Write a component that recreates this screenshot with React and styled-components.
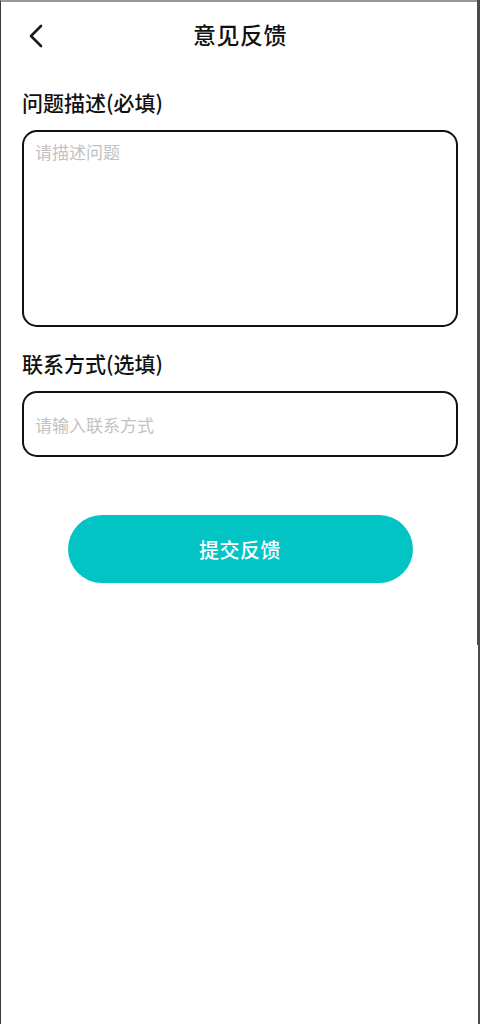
import React, { useState } from "react";
import styled, { createGlobalStyle } from "styled-components";

const GlobalStyle = createGlobalStyle`
  html, body {
    margin: 0;
    padding: 0;
    background: #ffffff;
  }
  body {
    font-family: "Noto Sans CJK SC", "Noto Sans", sans-serif;
  }
  * {
    box-sizing: border-box;
  }
`;

const Screen = styled.div`
  position: relative;
  width: 480px;
  min-height: 1024px;
  background: #ffffff;
  border-top: 2px solid #9a9a9a;
  border-left: 1px solid #3a3a3a;
  border-right: 2px solid #4a4a4a;
  padding: 0 20px 0 21px;
`;

const ScrollThumb = styled.div`
  position: absolute;
  top: -2px;
  right: -3px;
  width: 4px;
  height: 645px;
  background: #4a4a4a;
`;

const Header = styled.div`
  position: relative;
  height: 64px;
  display: flex;
  align-items: center;
  justify-content: center;
`;

const BackButton = styled.button`
  position: absolute;
  left: 2px;
  top: 20px;
  width: 24px;
  height: 28px;
  padding: 0;
  border: none;
  background: none;
  display: flex;
  align-items: center;
  justify-content: center;
  cursor: pointer;
`;

const Title = styled.h1`
  margin: 0;
  font-size: 23px;
  font-weight: 500;
  color: #111111;
  letter-spacing: 0.5px;
`;

const Label = styled.div`
  margin: 22px 0 14px;
  font-size: 21px;
  line-height: 28px;
  font-weight: 500;
  color: #111111;
`;

const boxStyle = `
  display: block;
  width: 100%;
  border: 2.5px solid #111111;
  border-radius: 15px;
  background: #ffffff;
  font-family: "Noto Sans CJK SC", "Noto Sans", sans-serif;
  font-size: 17px;
  color: #222222;
  outline: none;
  &::placeholder {
    color: #c2c2c2;
  }
`;

const TextArea = styled.textarea`
  ${boxStyle}
  height: 197px;
  padding: 8px 11px;
  line-height: 24px;
  resize: none;
`;

const Input = styled.input`
  ${boxStyle}
  height: 66px;
  padding: 0 11px;
`;

const SubmitButton = styled.button`
  display: flex;
  align-items: center;
  justify-content: center;
  width: 345px;
  height: 68px;
  margin: 58px auto 0;
  border: none;
  border-radius: 34px;
  background: #02c4c4;
  color: #ffffff;
  font-family: "Noto Sans CJK SC", "Noto Sans", sans-serif;
  font-size: 20px;
  font-weight: 500;
  letter-spacing: 0.5px;
  cursor: pointer;
`;

const ChevronLeft = () => (
  <svg width="16" height="24" viewBox="0 0 16 24" fill="none">
    <path
      d="M13 2 L3 12 L13 22"
      stroke="#1a1a1a"
      strokeWidth="2.6"
      strokeLinecap="round"
      strokeLinejoin="round"
    />
  </svg>
);

const App = () => {
  const [desc, setDesc] = useState("");
  const [contact, setContact] = useState("");

  return (
    <Screen>
      <GlobalStyle />
      <ScrollThumb />
      <Header>
        <BackButton aria-label="返回">
          <ChevronLeft />
        </BackButton>
        <Title>意见反馈</Title>
      </Header>

      <Label>问题描述(必填)</Label>
      <TextArea
        placeholder="请描述问题"
        value={desc}
        onChange={(e) => setDesc(e.target.value)}
      />

      <Label>联系方式(选填)</Label>
      <Input
        placeholder="请输入联系方式"
        value={contact}
        onChange={(e) => setContact(e.target.value)}
      />

      <SubmitButton>提交反馈</SubmitButton>
    </Screen>
  );
};

export default App;
